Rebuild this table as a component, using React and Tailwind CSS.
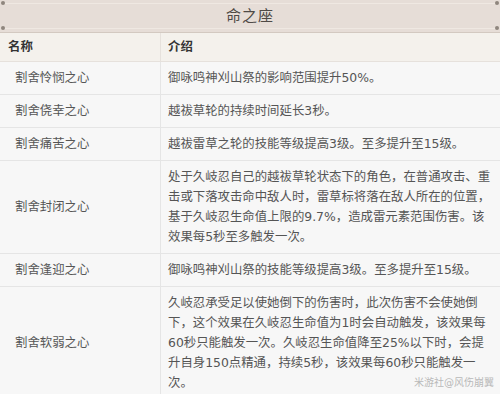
const rows = [
  { name: "割舍怜悯之心", desc: "御咏鸣神刈山祭的影响范围提升50%。" },
  { name: "割舍侥幸之心", desc: "越祓草轮的持续时间延长3秒。" },
  { name: "割舍痛苦之心", desc: "越祓雷草之轮的技能等级提高3级。至多提升至15级。" },
  {
    name: "割舍封闭之心",
    desc: "处于久岐忍自己的越祓草轮状态下的角色，在普通攻击、重击或下落攻击命中敌人时，雷草标将落在敌人所在的位置，基于久岐忍生命值上限的9.7%，造成雷元素范围伤害。该效果每5秒至多触发一次。",
  },
  { name: "割舍逢迎之心", desc: "御咏鸣神刈山祭的技能等级提高3级。至多提升至15级。" },
  {
    name: "割舍软弱之心",
    desc: "久岐忍承受足以使她倒下的伤害时，此次伤害不会使她倒下，这个效果在久岐忍生命值为1时会自动触发，该效果每60秒只能触发一次。久岐忍生命值降至25%以下时，会提升自身150点精通，持续5秒，该效果每60秒只能触发一次。",
  },
];

const Dot = ({ className }) => (
  <span className={`absolute w-[4px] h-[4px] rounded-full bg-[#8f867e] ${className}`} />
);

const App = () => {
  return (
    <div
      className="relative w-[500px] h-[394px] overflow-hidden bg-[#f7f7f7] text-[12.4px] leading-[20px] text-[#555]"
      style={{ fontFamily: '"DejaVu Sans", "Noto Sans CJK SC", sans-serif' }}
    >
      {/* title bar */}
      <div className="relative h-[33px] flex items-center justify-center bg-[#e6ddd7] border-b border-[#d3c9c1]">
        <div className="absolute inset-x-[3px] top-[3px] bottom-[3px] border-y border-[#efe8e2]" />
        <Dot className="left-[1px] top-[1px]" />
        <Dot className="left-[1px] bottom-[2px]" />
        <Dot className="right-[1px] top-[1px]" />
        <Dot className="right-[1px] bottom-[2px]" />
        <span className="relative text-[15px] text-[#4f4a46] tracking-[1px]">命之座</span>
      </div>

      {/* header */}
      <div className="grid grid-cols-[161px_1fr] bg-[#f4f1ec] border-b border-[#e6e1dc] font-bold text-[#333]">
        <div className="pl-[8px] py-[4px] border-r border-[#e6e1dc]">名称</div>
        <div className="pl-[7px] py-[4px]">介绍</div>
      </div>

      {rows.map((r) => (
        <div
          key={r.name}
          className="grid grid-cols-[161px_1fr] border-b border-[#e5e5e5] bg-[#f7f7f7]"
        >
          <div className="pl-[15px] py-[6px] flex items-center border-r border-[#e5e5e5]">
            {r.name}
          </div>
          <div className="pl-[7px] pr-[7px] py-[6px]">{r.desc}</div>
        </div>
      ))}

      <span className="absolute right-[6px] bottom-[5px] text-[10px] leading-[12px] text-[#b9b9b9]">
        米游社@风伤崩翼
      </span>
    </div>
  );
};

export default App;
